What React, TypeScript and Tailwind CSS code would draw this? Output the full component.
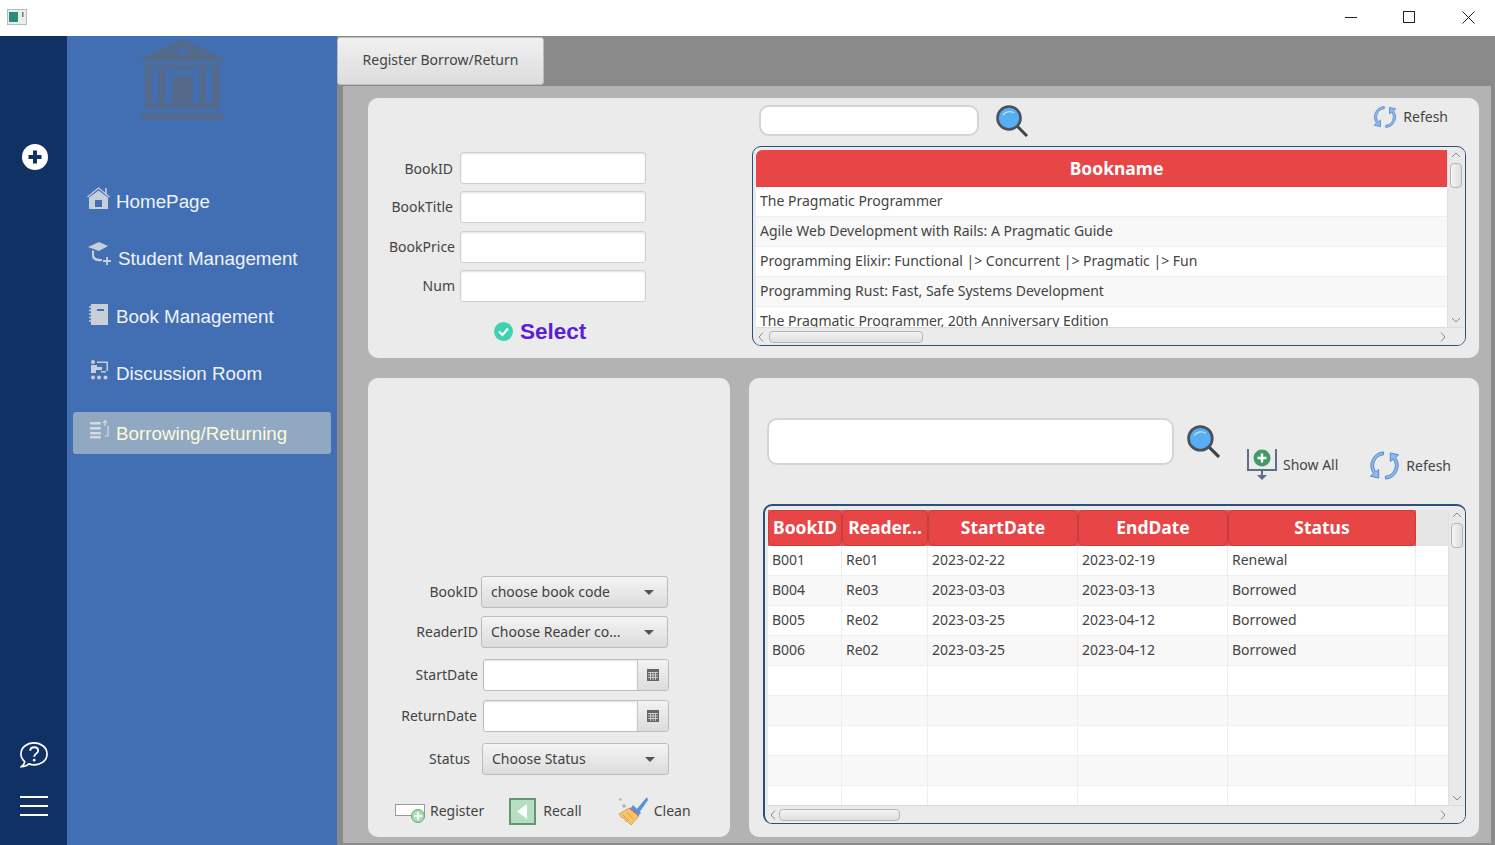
import React from 'react';

const books = [
  'The Pragmatic Programmer',
  'Agile Web Development with Rails: A Pragmatic Guide',
  'Programming Elixir: Functional |> Concurrent |> Pragmatic |> Fun',
  'Programming Rust: Fast, Safe Systems Development',
  'The Pragmatic Programmer, 20th Anniversary Edition',
];

const records = [
  ['B001', 'Re01', '2023-02-22', '2023-02-19', 'Renewal'],
  ['B004', 'Re03', '2023-03-03', '2023-03-13', 'Borrowed'],
  ['B005', 'Re02', '2023-03-25', '2023-04-12', 'Borrowed'],
  ['B006', 'Re02', '2023-03-25', '2023-04-12', 'Borrowed'],
  ['', '', '', '', ''],
  ['', '', '', '', ''],
  ['', '', '', '', ''],
  ['', '', '', '', ''],
  ['', '', '', '', ''],
];

const colClass = ['w-[74px]', 'w-[86px]', 'w-[150px]', 'w-[150px]', 'w-[188px]'];
const headers = ['BookID', 'Reader...', 'StartDate', 'EndDate', 'Status'];

const Magnifier = ({ size }: { size: number }) => (
  <svg width={size} height={size} viewBox="0 0 32 32" className="shrink-0">
    <line x1="20" y1="20" x2="31" y2="31" stroke="#3d4348" strokeWidth="3" />
    <circle cx="13" cy="13" r="11.5" fill="#57aef5" stroke="#4a5158" strokeWidth="2.6" />
    <path d="M7 10 A8 8 0 0 1 18 8" fill="none" stroke="#bfe0fb" strokeWidth="1.3" />
  </svg>
);

const RefreshIcon = ({ size }: { size: number }) => (
  <svg width={size} height={size} viewBox="0 0 32 32" className="shrink-0">
    <path d="M15 2 A14 14 0 0 0 4.5 24 L1.5 27 L10 29 L10 20 L7 22.5 A11 11 0 0 1 15 5 Z" fill="#8db8ea" stroke="#4f87cf" strokeWidth="1" />
    <path d="M17 30 A14 14 0 0 0 27.5 8 L30.5 5 L22 3 L22 12 L25 9.5 A11 11 0 0 1 17 27 Z" fill="#8db8ea" stroke="#4f87cf" strokeWidth="1" />
  </svg>
);

const ShowAllIcon = () => (
  <svg width="30" height="32" viewBox="0 0 30 32" className="shrink-0">
    <path d="M1 0 V21 H29 V0" fill="none" stroke="#5d7088" strokeWidth="2" />
    <circle cx="15" cy="9" r="8.5" fill="#3f9c66" />
    <path d="M15 4.5 V13.5 M10.5 9 H19.5" stroke="#fff" strokeWidth="2.4" />
    <line x1="15" y1="21" x2="15" y2="27" stroke="#5d7088" strokeWidth="2" />
    <path d="M10 26 H20 L15 31 Z" fill="#5d7088" />
  </svg>
);

const RegisterIcon = () => (
  <svg width="30" height="26" viewBox="0 0 30 26" className="shrink-0">
    <rect x="0.5" y="6.5" width="29" height="11" fill="#fff" stroke="#9a9a9a" />
    <circle cx="23" cy="18" r="6.5" fill="#a8dcb5" stroke="#62a676" />
    <path d="M23 14 V22 M19 18 H27" stroke="#fff" strokeWidth="1.8" />
  </svg>
);

const RecallIcon = () => (
  <svg width="27" height="27" viewBox="0 0 27 27" className="shrink-0">
    <rect x="1" y="1" width="25" height="25" fill="#b5dfc0" stroke="#62976f" strokeWidth="2" />
    <path d="M18 6 V21 L8 13.5 Z" fill="#fff" />
  </svg>
);

const BroomIcon = () => (
  <svg width="31" height="30" viewBox="0 0 31 30" className="shrink-0">
    <circle cx="2.5" cy="3.5" r="1.3" fill="#9fb4c9" />
    <circle cx="6" cy="10" r="1.8" fill="#9fb4c9" />
    <path d="M18 14 L29 1 L30 4 L21 17 Z" fill="#5a92d8" />
    <path d="M15 9 L23 17 L20 20 L12 13 Z" fill="#5a92d8" />
    <path d="M11 12 L21 20 L13 29 L9 25 L8 26 L6 22 L4 22 L1 18 Z" fill="#f5c56a" stroke="#d79a3c" strokeWidth="0.8" />
    <path d="M5 19 L11 25 M9 16 L15 23" stroke="#d79a3c" strokeWidth="0.9" />
    <path d="M11 12 L21 20" stroke="#dd5a4a" strokeWidth="1" />
  </svg>
);

const CalendarIcon = () => (
  <svg width="12" height="12" viewBox="0 0 12 12">
    <rect width="12" height="12" fill="#666" />
    <path d="M1 3.5 H11 M1 6 H11 M1 8.5 H11 M3.5 3 V11 M6 3 V11 M8.5 3 V11" stroke="#ddd" strokeWidth="0.8" />
  </svg>
);

const Chevron = ({ dir }: { dir: 'up' | 'down' | 'left' | 'right' }) => {
  const d = {
    up: 'M1 6 L5 2 L9 6',
    down: 'M1 3 L5 7 L9 3',
    left: 'M6 0.5 L2 5 L6 9.5',
    right: 'M3 0.5 L7 5 L3 9.5',
  }[dir];
  return (
    <svg width="10" height="10" viewBox="0 0 10 10" className="shrink-0">
      <path d={d} fill="none" stroke="#8a8a8a" strokeWidth="1" />
    </svg>
  );
};

const VScroll = ({ w }: { w: string }) => (
  <div className={`${w} shrink-0 h-full bg-[#e9e9e9] flex flex-col items-center pt-[1px] pb-[2px] pr-[1px] border-l border-[#e0e0e0]`}>
    <Chevron dir="up" />
    <div className="w-[12px] h-[25px] mt-[2px] rounded-[4px] border border-[#b5b5b5] bg-gradient-to-r from-[#f4f4f4] to-[#dedede]" />
    <div className="mt-auto">
      <Chevron dir="down" />
    </div>
  </div>
);

const HScroll = ({ thumb }: { thumb: string }) => (
  <div className="h-[18px] shrink-0 bg-[#ebebeb] flex items-center px-[1px] border-t border-[#dcdcdc]">
    <Chevron dir="left" />
    <div className={`${thumb} h-[12px] rounded-[4px] border border-[#b5b5b5] bg-gradient-to-b from-[#f4f4f4] to-[#dedede]`} />
    <div className="ml-auto mr-[16px]">
      <Chevron dir="right" />
    </div>
  </div>
);

const TextField = () => (
  <div className="w-[186px] h-[32px] bg-white border border-[#cfcfcf] rounded-[3px] shadow-[inset_0_1px_2px_rgba(0,0,0,0.12)]" />
);

const Combo = ({ text, w }: { text: string; w: string }) => (
  <div className={`${w} h-[32px] flex items-center pl-[9px] pr-[13px] border border-[#bdbdbd] rounded-[3px] bg-gradient-to-b from-[#f4f4f4] to-[#dcdcdc]`}>
    <span className="text-[#3f3f3f] pb-[2px]">{text}</span>
    <span className="ml-auto w-0 h-0 border-x-[5px] border-x-transparent border-t-[5px] border-t-[#555]" />
  </div>
);

const DateField = () => (
  <div className="w-[186px] h-[32px] flex border border-[#bdbdbd] rounded-[3px] overflow-hidden">
    <div className="flex-1 bg-white shadow-[inset_0_1px_2px_rgba(0,0,0,0.12)]" />
    <div className="w-[31px] flex items-center justify-center border-l border-[#c8c8c8] bg-gradient-to-b from-[#f2f2f2] to-[#dcdcdc]">
      <CalendarIcon />
    </div>
  </div>
);

const NavItem = ({ icon, label, className, textClass }: { icon: React.ReactNode; label: string; className: string; textClass?: string }) => (
  <div className={`h-[42px] flex items-center ml-[6px] mr-[6px] rounded-[3px] ${className}`}>
    {icon}
    <span className={`pt-[2px] text-[18.8px] font-['Liberation_Sans',sans-serif] ${textClass ?? 'text-[#eef2f7]'}`}>{label}</span>
  </div>
);

export default function App() {
  return (
    <div className="w-screen h-screen overflow-hidden flex flex-col bg-white text-[14px] text-[#444] font-['Noto_Sans',sans-serif]">
      {/* title bar */}
      <div className="h-[36px] shrink-0 flex items-center pl-[7px] pr-[20px] pb-[2px]">
        <svg width="20" height="16" viewBox="0 0 20 16">
          <rect x="0.5" y="0.5" width="19" height="15" fill="#e6eeee" stroke="#b9b9b9" />
          <rect x="2" y="3" width="9" height="10" fill="#2c8a78" />
          <rect x="15" y="3" width="1.5" height="5" fill="#777" />
        </svg>
        <div className="ml-auto flex items-center">
          <svg width="12" height="12" viewBox="0 0 12 12"><line x1="0" y1="6.5" x2="12" y2="6.5" stroke="#222" /></svg>
          <svg className="ml-[46px]" width="12" height="12" viewBox="0 0 12 12"><rect x="0.5" y="0.5" width="11" height="11" fill="none" stroke="#222" /></svg>
          <svg className="ml-[47px]" width="13" height="13" viewBox="0 0 13 13"><path d="M0.5 0.5 L12.5 12.5 M12.5 0.5 L0.5 12.5" stroke="#222" /></svg>
        </div>
      </div>

      <div className="flex-1 min-h-0 flex">
        {/* icon rail */}
        <div className="w-[67px] shrink-0 bg-[#0f3163] flex flex-col items-center pt-[108px] pb-[29px]">
          <svg className="ml-[3px]" width="26" height="26" viewBox="0 0 26 26">
            <circle cx="13" cy="13" r="13" fill="#fff" />
            <path d="M13 6.5 V19.5 M6.5 13 H19.5" stroke="#0f3163" strokeWidth="4" />
          </svg>
          <svg className="mt-auto" width="28" height="28" viewBox="0 0 30 30">
            <path d="M15 2 C22.5 2 29 7 29 14 C29 21 22.5 25.5 15 25.5 C13 25.5 11 25 9.5 24.5 C7 27 4 27.5 1.5 27.5 C3.5 26 5 24 5 22 C2.5 20 1 17 1 14 C1 7 7.5 2 15 2 Z" fill="none" stroke="#fff" strokeWidth="1.8" />
            <path d="M11 10.5 C11 5.5 19.5 5.5 19.5 10.5 C19.5 13.5 15.2 13.5 15.2 17" fill="none" stroke="#fff" strokeWidth="2" />
            <circle cx="15.2" cy="20.5" r="1.4" fill="#fff" />
          </svg>
          <div className="mt-[27px] w-[28px] flex flex-col gap-[7px]">
            <div className="h-[2px] bg-white" />
            <div className="h-[2px] bg-white" />
            <div className="h-[2px] bg-white" />
          </div>
        </div>

        {/* navigation */}
        <div className="w-[270px] shrink-0 bg-[#426fb3] flex flex-col">
          <svg className="ml-[75px] mt-[3px]" width="81" height="81" viewBox="0 0 81 81">
            <path d="M40.5 0 L81 19 V23 H0 V19 Z" fill="#546a8c" />
            <circle cx="40.5" cy="13" r="3.5" fill="#426fb3" />
            <rect x="2" y="26" width="77" height="3" fill="#546a8c" />
            <rect x="3" y="29" width="7" height="41" fill="#546a8c" />
            <rect x="16" y="29" width="8" height="41" fill="#546a8c" />
            <rect x="30" y="37" width="21" height="33" fill="#546a8c" />
            <rect x="30" y="29" width="21" height="3" fill="#546a8c" />
            <rect x="57" y="29" width="7" height="41" fill="#546a8c" />
            <rect x="70" y="29" width="8" height="41" fill="#546a8c" />
            <rect x="3" y="64" width="75" height="6" fill="#546a8c" />
            <rect x="0" y="74" width="81" height="7" fill="#546a8c" />
          </svg>
          <NavItem
            className="mt-[60px] pl-[14px]"
            label="HomePage"
            icon={
              <svg className="mr-[6px] -mt-[6px]" width="23" height="22" viewBox="0 0 23 22">
                <path d="M0.5 10 L11.5 1 L22.5 10" fill="none" stroke="#c9cfd8" strokeWidth="1.2" />
                <path d="M19 1 V7" stroke="#c9cfd8" strokeWidth="1.6" />
                <path d="M2 10.5 L11.5 3.5 L21 10.5 V22 H2 Z M8 13 V20 H15 V13 Z" fill="#c9cfd8" fillRule="evenodd" />
              </svg>
            }
          />
          <NavItem
            className="mt-[15px] pl-[15px]"
            label="Student Management"
            icon={
              <svg className="mr-[6px] -mt-[8px]" width="24" height="24" viewBox="0 0 24 24">
                <path d="M0 5 L11 0 L20 4 L11 9 Z" fill="#c9cfd8" />
                <path d="M4 8 V14 C4 18 9 20 14 19 L14 17 C10 17 6 16 6 13 V9 Z" fill="#c9cfd8" />
                <path d="M19 15 V23 M15 19 H23" stroke="#c9cfd8" strokeWidth="1.8" />
              </svg>
            }
          />
          <NavItem
            className="mt-[16px] pl-[16px]"
            label="Book Management"
            icon={
              <svg className="mr-[8px] -mt-[4px]" width="19" height="21" viewBox="0 0 19 21">
                <path d="M2 0 H19 V21 H2 Z" fill="#c9cfd8" />
                <path d="M0 3 H3 M0 6.5 H3 M0 10 H3 M0 13.5 H3 M0 17 H3" stroke="#c9cfd8" strokeWidth="1.4" />
                <rect x="8" y="5" width="7" height="2" fill="#426fb3" />
              </svg>
            }
          />
          <NavItem
            className="mt-[15px] pl-[17px]"
            label="Discussion Room"
            icon={
              <svg className="mr-[8px] -mt-[6px]" width="18" height="20" viewBox="0 0 18 20">
                <circle cx="3" cy="2" r="2" fill="#c9cfd8" />
                <path d="M7 1.5 H18 V11 H16.5 V3 H7 Z" fill="#c9cfd8" />
                <path d="M1 5 H7 V7 H12 V10 H6 V13 H1 Z" fill="#c9cfd8" />
                <rect x="11" y="11" width="5" height="1.5" fill="#c9cfd8" />
                <circle cx="3" cy="17.5" r="2" fill="#c9cfd8" />
                <circle cx="9" cy="17.5" r="2" fill="#c9cfd8" />
                <circle cx="15.5" cy="17.5" r="2" fill="#c9cfd8" />
              </svg>
            }
          />
          <NavItem
            className="mt-[18px] pl-[17px] bg-[#91a8c3]"
            label="Borrowing/Returning"
            textClass="text-[#fbfbd9]"
            icon={
              <svg className="mr-[7px] -mt-[8px]" width="19" height="19" viewBox="0 0 19 19">
                <rect x="0" y="2" width="11" height="2.4" rx="1" fill="#d5dae0" />
                <rect x="0" y="7" width="11" height="2.4" rx="1" fill="#d5dae0" />
                <rect x="0" y="12" width="11" height="2.4" rx="1" fill="#d5dae0" />
                <rect x="0" y="16" width="11" height="2.4" rx="1" fill="#d5dae0" />
                <path d="M15 1 V6 M13 3 L15 0.5 L17 3" fill="none" stroke="#d5dae0" strokeWidth="1.2" />
                <path d="M15 16 H18 V6" fill="none" stroke="#d5dae0" strokeWidth="1.2" />
              </svg>
            }
          />
        </div>

        {/* main */}
        <div className="flex-1 min-w-0 bg-[#8a8a8a] flex flex-col">
          <div className="h-[50px] shrink-0 pt-[1px]">
            <div className="w-[207px] h-[48px] flex items-center justify-center pb-[4px] rounded-[3px] border border-[#bcbcbc] bg-gradient-to-b from-[#f1f1f1] to-[#dcdcdc] text-[#444]">
              Register Borrow/Return
            </div>
          </div>

          <div className="flex-1 min-h-0 ml-[6px] mr-[4px] mb-[2px] bg-[#b3b3b3] pl-[25px] pr-[12px] pt-[12px] pb-[6px] flex flex-col gap-[20px]">
            {/* upper card */}
            <div className="h-[260px] shrink-0 bg-[#ebebeb] rounded-[10px] flex pr-[13px] pb-[12px]">
              <div className="w-[384px] shrink-0 pt-[54px]">
                <div className="flex items-center">
                  <span className="w-[85px] text-right">BookID</span>
                  <div className="ml-[7px]"><TextField /></div>
                </div>
                <div className="flex items-center mt-[7px]">
                  <span className="w-[85px] text-right pb-[2px]">BookTitle</span>
                  <div className="ml-[7px]"><TextField /></div>
                </div>
                <div className="flex items-center mt-[8px]">
                  <span className="w-[87px] text-right pb-[2px]">BookPrice</span>
                  <div className="ml-[5px]"><TextField /></div>
                </div>
                <div className="flex items-center mt-[7px]">
                  <span className="w-[87px] text-right pb-[2px]">Num</span>
                  <div className="ml-[5px]"><TextField /></div>
                </div>
                <div className="flex items-center ml-[126px] mt-[16px] h-[26px]">
                  <svg width="19" height="19" viewBox="0 0 19 19">
                    <circle cx="9.5" cy="9.5" r="9.5" fill="#3ed3b0" />
                    <path d="M5 9.5 L8.5 13 L14 6.5" fill="none" stroke="#fff" strokeWidth="2.2" />
                  </svg>
                  <span className="ml-[7px] pt-[1px] text-[22.5px] font-bold text-[#5a1fd6] font-['Liberation_Sans',sans-serif]">Select</span>
                </div>
              </div>

              <div className="flex-1 min-w-0 flex flex-col pt-[7px]">
                <div className="h-[31px] shrink-0 flex items-start pl-[7px] pr-[18px]">
                  <div className="w-[220px] h-[31px] bg-white border-2 border-[#d4d4d4] rounded-[10px]" />
                  <div className="ml-[17px]"><Magnifier size={32} /></div>
                  <div className="ml-auto flex items-center gap-[6px]">
                    <RefreshIcon size={24} />
                    <span className="-mt-[2px]">Refesh</span>
                  </div>
                </div>
                <div className="mt-[10px] flex-1 min-h-0 border border-[#2e4f7e] rounded-[9px] pl-[3px] pt-[3px] flex flex-col overflow-hidden">
                  <div className="flex-1 min-h-0 flex">
                    <div className="flex-1 min-w-0 flex flex-col overflow-hidden bg-white">
                      <div className="h-[37px] shrink-0 flex items-center justify-center pl-[30px] bg-[#e84547] rounded-tl-[6px] text-white text-[17.5px] font-bold">
                        Bookname
                      </div>
                      {books.map((b, i) => (
                        <div
                          key={b}
                          className={`h-[30px] shrink-0 flex items-center pl-[4px] pb-[2px] border-b border-[#eeeeee] ${i % 2 === 1 ? 'bg-[#f8f8f8]' : 'bg-white'}`}
                        >
                          {b}
                        </div>
                      ))}
                    </div>
                    <VScroll w="w-[18px]" />
                  </div>
                  <HScroll thumb="w-[154px] ml-[2px]" />
                </div>
              </div>
            </div>

            {/* lower cards */}
            <div className="flex-1 min-h-0 flex gap-[19px]">
              <div className="w-[362px] shrink-0 bg-[#ebebeb] rounded-[10px] flex flex-col justify-end pb-[10px]">
                <div className="flex items-center">
                  <span className="w-[110px] text-right pb-[2px]">BookID</span>
                  <div className="ml-[3px]"><Combo text="choose book code" w="w-[187px]" /></div>
                </div>
                <div className="flex items-center mt-[8px]">
                  <span className="w-[110px] text-right pb-[2px]">ReaderID</span>
                  <div className="ml-[3px]"><Combo text="Choose Reader co..." w="w-[187px]" /></div>
                </div>
                <div className="flex items-center mt-[11px]">
                  <span className="w-[110px] text-right pb-[2px]">StartDate</span>
                  <div className="ml-[5px]"><DateField /></div>
                </div>
                <div className="flex items-center mt-[9px]">
                  <span className="w-[109px] text-right pb-[2px]">ReturnDate</span>
                  <div className="ml-[6px]"><DateField /></div>
                </div>
                <div className="flex items-center mt-[11px]">
                  <span className="w-[102px] text-right pb-[2px]">Status</span>
                  <div className="ml-[12px]"><Combo text="Choose Status" w="w-[187px]" /></div>
                </div>
                <div className="h-[32px] mt-[20px] flex items-center pl-[27px]">
                  <div className="flex items-center gap-[5px]">
                    <RegisterIcon />
                    <span className="pb-[2px]">Register</span>
                  </div>
                  <div className="flex items-center gap-[7px] ml-[25px]">
                    <RecallIcon />
                    <span className="pb-[2px]">Recall</span>
                  </div>
                  <div className="flex items-center gap-[5px] ml-[36px]">
                    <BroomIcon />
                    <span className="pb-[2px]">Clean</span>
                  </div>
                </div>
              </div>

              <div className="flex-1 min-w-0 bg-[#ebebeb] rounded-[10px] flex flex-col pt-[40px] pl-[14px] pr-[13px] pb-[13px]">
                <div className="h-[86px] shrink-0 flex items-start pl-[4px]">
                  <div className="w-[407px] h-[47px] bg-white border-2 border-[#d4d4d4] rounded-[10px]" />
                  <div className="ml-[13px] mt-[7px]"><Magnifier size={33} /></div>
                  <div className="ml-[27px] mt-[31px] flex items-center gap-[6px]">
                    <ShowAllIcon />
                    <span className="pb-[1px]">Show All</span>
                  </div>
                  <div className="ml-[31px] mt-[32px] flex items-center gap-[6px]">
                    <RefreshIcon size={31} />
                    <span className="pb-[1px]">Refesh</span>
                  </div>
                </div>

                <div className="flex-1 min-h-0 border border-t-2 border-l-2 border-[#2e4f7e] rounded-[9px] pl-[3px] pt-[4px] flex flex-col overflow-hidden">
                  <div className="flex-1 min-h-0 flex">
                    <div className="flex-1 min-w-0 flex flex-col overflow-hidden bg-white">
                      <div className="h-[36px] shrink-0 flex bg-[#e6e6e6]">
                        {headers.map((h, i) => (
                          <div key={h} className={`${colClass[i]} shrink-0 bg-[#d9595b]`}>
                            <div className="h-full flex items-center justify-center pb-[2px] bg-[#e84547] rounded-[6px] border border-[#c93c3f] text-white text-[17.5px] font-bold whitespace-nowrap">
                              {h}
                            </div>
                          </div>
                        ))}
                      </div>
                      {records.map((r, i) => (
                        <div key={i} className={`h-[30px] shrink-0 flex border-b border-[#f0f0f0] ${i % 2 === 1 ? 'bg-[#f8f8f8]' : 'bg-white'}`}>
                          {r.map((c, j) => (
                            <div key={j} className={`${colClass[j]} shrink-0 flex items-center pl-[4px] pb-[2px] border-r border-[#eeeeee]`}>
                              {c}
                            </div>
                          ))}
                        </div>
                      ))}
                    </div>
                    <VScroll w="w-[17px]" />
                  </div>
                  <HScroll thumb="w-[121px]" />
                </div>
              </div>
            </div>
          </div>
        </div>
      </div>
    </div>
  );
}
